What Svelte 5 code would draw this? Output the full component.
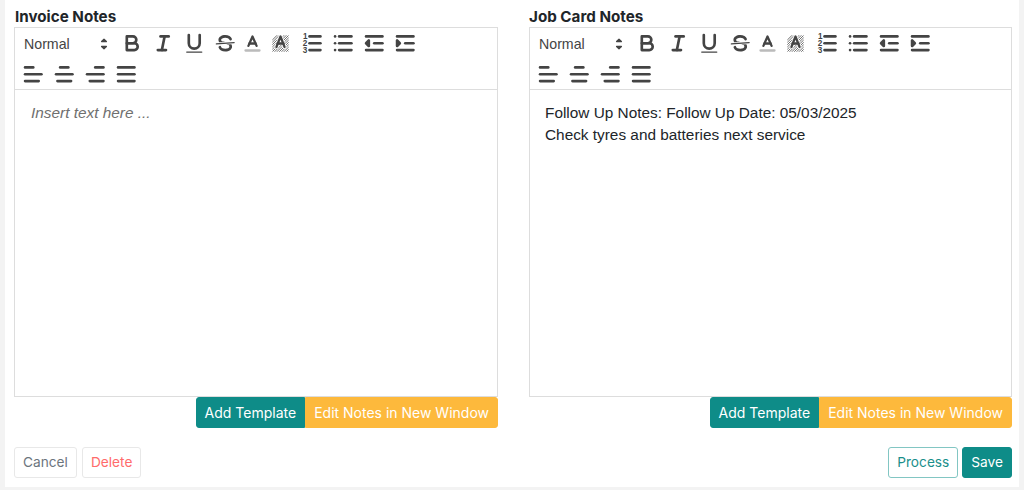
<script>
  const panels = [
    { title: 'Invoice Notes', lines: [], placeholder: 'Insert text here ...' },
    { title: 'Job Card Notes', lines: ['Follow Up Notes: Follow Up Date: 05/03/2025', 'Check tyres and batteries next service'], placeholder: '' }
  ];
  const aligns = [
    [[3, 9, 4], [3, 15, 9], [3, 13, 14]],
    [[6, 12, 4], [3, 15, 9], [4, 14, 14]],
    [[9, 15, 4], [3, 15, 9], [5, 15, 14]],
    [[3, 15, 4], [3, 15, 9], [3, 15, 14]]
  ];
  const hatch = Array.from({ length: 16 }, (_, i) => i * 2);
</script>

<div class="page">
  <div class="grid">
    {#each panels as p}
      <section class="col">
        <h3>{p.title}</h3>
        <div class="box">
          <div class="toolbar">
            <div class="row">
              <div class="picker">
                <span>Normal</span>
                <svg viewBox="0 0 18 18" class="updown"><polygon points="7 11 9 13 11 11"/><polygon points="7 7 9 5 11 7"/></svg>
              </div>
              <button class="tb" aria-label="Bold"><svg viewBox="0 0 18 18"><path d="M5,4H9.5A2.5,2.5,0,0,1,12,6.5v0A2.5,2.5,0,0,1,9.5,9H5V4Z"/><path d="M5,9h5.5A2.5,2.5,0,0,1,13,11.5v0A2.5,2.5,0,0,1,10.5,14H5V9Z"/></svg></button>
              <button class="tb" aria-label="Italic"><svg viewBox="0 0 18 18"><line x1="7" x2="13" y1="4" y2="4"/><line x1="5" x2="11" y1="14" y2="14"/><line x1="8" x2="10" y1="14" y2="4"/></svg></button>
              <button class="tb" aria-label="Underline"><svg viewBox="0 0 18 18"><path d="M5,3V9a4,4,0,0,0,4,4H9a4,4,0,0,0,4-4V3"/><rect class="f" x="3" y="15" width="12" height="1" rx=".5"/></svg></button>
              <button class="tb" aria-label="Strike"><svg viewBox="0 0 18 18"><line class="thin" x1="15.5" x2="2.5" y1="8.5" y2="9.5"/><path class="f" d="M9.007,8C6.542,7.791,6,7.519,6,6.5,6,5.792,7.283,5,9,5c1.571,0,2.765.679,2.969,1.309a1,1,0,0,0,1.9-.617C13.356,4.106,11.354,3,9,3,6.2,3,4,4.538,4,6.5a3.2,3.2,0,0,0,.5,1.843Z"/><path class="f" d="M8.984,10C11.457,10.208,12,10.479,12,11.5c0,.708-1.283,1.5-3,1.5-1.571,0-2.765-.679-2.969-1.309a1,1,0,1,0-1.9.617C4.644,13.894,6.646,15,9,15c2.8,0,5-1.538,5-3.5a3.2,3.2,0,0,0-.5-1.843Z"/></svg></button>
              <button class="tb small color" aria-label="Color"><svg viewBox="0 0 18 18"><line class="lbl" x1="3" x2="15" y1="15" y2="15"/><polyline points="5.5 11 9 3 12.5 11"/><line x1="11.63" x2="6.38" y1="9" y2="9"/></svg></button>
              <button class="tb small bg" aria-label="Background"><svg viewBox="0 0 18 18">
                <defs><clipPath id="sq"><rect x="2" y="2" width="14" height="14"/></clipPath></defs>
                <g class="hatch" clip-path="url(#sq)">
                  {#each hatch as h}<line x1={h - 10} y1="18" x2={h + 10} y2="-2"/>{/each}
                </g>
                <polyline class="halo" points="5.5 12 9 3 12.5 12"/>
                <polyline points="5.5 12 9 3 12.5 12"/><line x1="11.63" x2="6.38" y1="9" y2="9"/></svg></button>
              <button class="tb" aria-label="Ordered list"><svg viewBox="0 0 18 18"><line x1="7" x2="15" y1="4" y2="4"/><line x1="7" x2="15" y1="9" y2="9"/><line x1="7" x2="15" y1="14" y2="14"/><text x="2.2" y="6">1</text><text x="2" y="11">2</text><text x="2" y="16">3</text></svg></button>
              <button class="tb" aria-label="Bullet list"><svg viewBox="0 0 18 18"><line x1="6" x2="15" y1="4" y2="4"/><line x1="6" x2="15" y1="9" y2="9"/><line x1="6" x2="15" y1="14" y2="14"/><line x1="3" x2="3" y1="4" y2="4"/><line x1="3" x2="3" y1="9" y2="9"/><line x1="3" x2="3" y1="14" y2="14"/></svg></button>
              <button class="tb" aria-label="Outdent"><svg viewBox="0 0 18 18"><line x1="3" x2="15" y1="14" y2="14"/><line x1="3" x2="15" y1="4" y2="4"/><line x1="9" x2="15" y1="9" y2="9"/><polyline class="fs" points="5 7 5 11 3 9 5 7"/></svg></button>
              <button class="tb" aria-label="Indent"><svg viewBox="0 0 18 18"><line x1="3" x2="15" y1="14" y2="14"/><line x1="3" x2="15" y1="4" y2="4"/><line x1="9" x2="15" y1="9" y2="9"/><polyline class="fs" points="3 7 3 11 5 9 3 7"/></svg></button>
            </div>
            <div class="row second">
              {#each aligns as a}
                <button class="tb" aria-label="Align"><svg viewBox="0 0 18 18">{#each a as l}<line x1={l[0]} x2={l[1]} y1={l[2]} y2={l[2]}/>{/each}</svg></button>
              {/each}
            </div>
          </div>
          <div class="editor">
            {#if p.lines.length}
              {#each p.lines as l}<p>{l}</p>{/each}
            {:else}
              <p class="ph">{p.placeholder}</p>
            {/if}
          </div>
        </div>
        <div class="under">
          <button class="btn teal join-l">Add Template</button>
          <button class="btn amber join-r">Edit Notes in New Window</button>
        </div>
      </section>
    {/each}
  </div>
  <div class="actions">
    <div class="grp wide">
      <button class="btn light cancel">Cancel</button>
      <button class="btn light delete">Delete</button>
    </div>
    <div class="grp">
      <button class="btn outline">Process</button>
      <button class="btn teal">Save</button>
    </div>
  </div>
</div>

<style>
  :global(body) { margin: 0; background: #f3f3f3; }
  .page {
    box-sizing: border-box;
    width: 1014px;
    height: 487px;
    margin-left: 5px;
    background: #fff;
    padding: 8px 7px 8px 9px;
    font-family: Inter, "Liberation Sans", sans-serif;
  }
  .grid { display: grid; grid-template-columns: 484px 483px; column-gap: 31px; }
  h3 {
    margin: 0;
    height: 19px;
    line-height: 17px;
    font-size: 15.2px;
    font-weight: 700;
    color: #212529;
  }
  .col:first-child h3 { padding-left: 1px; }
  .box { border: 1px solid #ddd; box-sizing: border-box; height: 370px; }
  .toolbar {
    box-sizing: border-box;
    height: 62px;
    padding: 0 8px;
    border-bottom: 1px solid #ddd;
  }
  .row { display: flex; height: 31px; align-items: center; }
  .row.second { margin-left: -5px; }
  .picker {
    width: 94.1px;
    display: flex;
    align-items: center;
    justify-content: space-between;
    font-family: "Liberation Sans", sans-serif;
    font-size: 14.2px;
    color: #444;
    padding-right: 2px;
    box-sizing: border-box;
  }
  .picker span { padding-left: 1px; }
  .updown { width: 22px; height: 22px; }
  .updown polygon { fill: #444; stroke: #444; stroke-width: 1; stroke-linejoin: round; }
  .tb {
    width: 30.8px;
    height: 31px;
    padding: 0;
    border: 0;
    background: none;
    display: flex;
    align-items: center;
    justify-content: center;
    flex: none;
  }
  .tb svg { width: 24.5px; height: 24.5px; flex: none; overflow: visible; }
  .tb.small { width: 28px; }
  .tb.color { margin-left: -2px; }
  .tb.bg { margin-right: 3px; }
  .tb.small svg { width: 21px; height: 21px; }
  .tb line, .tb path, .tb polyline {
    fill: none;
    stroke: #444;
    stroke-width: 1.95;
    stroke-linecap: round;
    stroke-linejoin: round;
  }
  .tb path.f, .tb rect.f { fill: #444; stroke: none; }
  .tb .thin { stroke-width: 1; }
  .tb .lbl { stroke: #bbb; }
  .tb .fs { fill: #444; }
  .tb .hatch line { stroke: #666; stroke-width: .8; stroke-linecap: butt; }
  .tb .halo { stroke: #fff; stroke-width: 3.4; }
  .tb text { font: 700 6px "Liberation Sans", sans-serif; fill: #444; }
  .editor {
    padding: 12px 15px;
    font-family: "Liberation Sans", sans-serif;
    font-size: 15.36px;
    line-height: 22px;
    color: #212529;
  }
  .col:first-child .editor { padding-left: 16px; }
  .editor p { margin: 0; }
  .ph { font-style: italic; color: #6f6f6f; }
  .under { display: flex; justify-content: flex-end; height: 31px; }
  .btn {
    box-sizing: border-box;
    height: 31px;
    padding: 0 8px;
    border: 1px solid transparent;
    border-radius: 3px;
    font-family: Inter, "Liberation Sans", sans-serif;
    font-size: 14px;
    font-weight: 400;
    line-height: 1;
  }
  .teal { background: #0e8c88; color: #fff; border-color: #0e8c88; }
  .amber { background: #fdb93c; color: #fff; border-color: #fdb93c; }
  .join-l { border-radius: 3px 0 0 3px; }
  .join-r { border-radius: 0 3px 3px 0; }
  .actions { display: flex; justify-content: space-between; margin-top: 19px; }
  .actions .btn { font-size: 13.7px; }
  .grp { display: flex; gap: 4px; }
  .grp.wide { gap: 5px; }
  .light { background: #fff; border-color: #e8e8e8; }
  .cancel { color: #6c757d; }
  .delete { color: #ff6b6b; }
  .outline { background: #fff; border-color: #82c6c3; color: #1a8f8b; }
</style>
